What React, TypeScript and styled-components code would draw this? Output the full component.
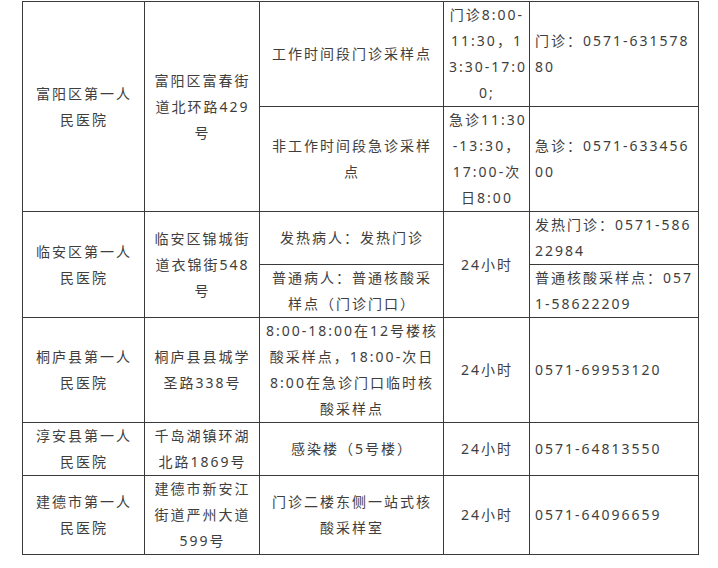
import styled, { createGlobalStyle } from 'styled-components';

const GlobalStyle = createGlobalStyle`
    html, body {
        margin: 0;
        padding: 0;
        background: #ffffff;
    }
`;

const PageWrapper = styled.div`
    padding: 1px 0 0 22px;
    font-family: 'Noto Sans', 'Noto Sans CJK SC', sans-serif;
    font-size: 14px;
    letter-spacing: 2px;
    color: #3e3e3e;
`;

const SiteTable = styled.table`
    width: 676px;
    table-layout: fixed;
    border-collapse: collapse;
    border: 1px solid #3a3a3a;
`;

const TD = styled.td<{ $align: 'left' | 'center' }>`
    border: 1px solid #3a3a3a;
    padding: 0 4px 0 5px;
    line-height: 26px;
    vertical-align: middle;
    text-align: ${p => p.$align};
`;

const Line = styled.span`
    display: block;
    white-space: nowrap;
`;

type Cell = {
    readonly lines: readonly string[];
    readonly rowSpan?: number;
    readonly align?: 'left' | 'center';
};

const columnWidths = [122, 115, 184, 86, 169];

const rows: readonly (readonly Cell[])[] = [
    [
        { lines: ['富阳区第一人', '民医院'], rowSpan: 2 },
        { lines: ['富阳区富春街', '道北环路429', '号'], rowSpan: 2 },
        { lines: ['工作时间段门诊采样点'] },
        { lines: ['门诊8:00-', '11:30，1', '3:30-17:0', '0;'] },
        { lines: ['门诊：0571-631578', '80'], align: 'left' },
    ],
    [
        { lines: ['非工作时间段急诊采样', '点'] },
        { lines: ['急诊11:30', '-13:30，', '17:00-次', '日8:00'] },
        { lines: ['急诊：0571-633456', '00'], align: 'left' },
    ],
    [
        { lines: ['临安区第一人', '民医院'], rowSpan: 2 },
        { lines: ['临安区锦城街', '道衣锦街548', '号'], rowSpan: 2 },
        { lines: ['发热病人：发热门诊'] },
        { lines: ['24小时'], rowSpan: 2 },
        { lines: ['发热门诊：0571-586', '22984'], align: 'left' },
    ],
    [
        { lines: ['普通病人：普通核酸采', '样点（门诊门口）'] },
        { lines: ['普通核酸采样点：057', '1-58622209'], align: 'left' },
    ],
    [
        { lines: ['桐庐县第一人', '民医院'] },
        { lines: ['桐庐县县城学', '圣路338号'] },
        { lines: ['8:00-18:00在12号楼核', '酸采样点，18:00-次日', '8:00在急诊门口临时核', '酸采样点'] },
        { lines: ['24小时'] },
        { lines: ['0571-69953120'], align: 'left' },
    ],
    [
        { lines: ['淳安县第一人', '民医院'] },
        { lines: ['千岛湖镇环湖', '北路1869号'] },
        { lines: ['感染楼（5号楼）'] },
        { lines: ['24小时'] },
        { lines: ['0571-64813550'], align: 'left' },
    ],
    [
        { lines: ['建德市第一人', '民医院'] },
        { lines: ['建德市新安江', '街道严州大道', '599号'] },
        { lines: ['门诊二楼东侧一站式核', '酸采样室'] },
        { lines: ['24小时'] },
        { lines: ['0571-64096659'], align: 'left' },
    ],
];

export default function App() {
    return (
        <PageWrapper>
            <GlobalStyle />
            <SiteTable>
                <colgroup>
                    {columnWidths.map((w, i) => <col key={i} style={{ width: w }} />)}
                </colgroup>
                <tbody>
                    {rows.map((row, r) => (
                        <tr key={r}>
                            {row.map((cell, c) => (
                                <TD key={c} rowSpan={cell.rowSpan} $align={cell.align ?? 'center'}>
                                    {cell.lines.map((l, i) => <Line key={i}>{l}</Line>)}
                                </TD>
                            ))}
                        </tr>
                    ))}
                </tbody>
            </SiteTable>
        </PageWrapper>
    );
}
